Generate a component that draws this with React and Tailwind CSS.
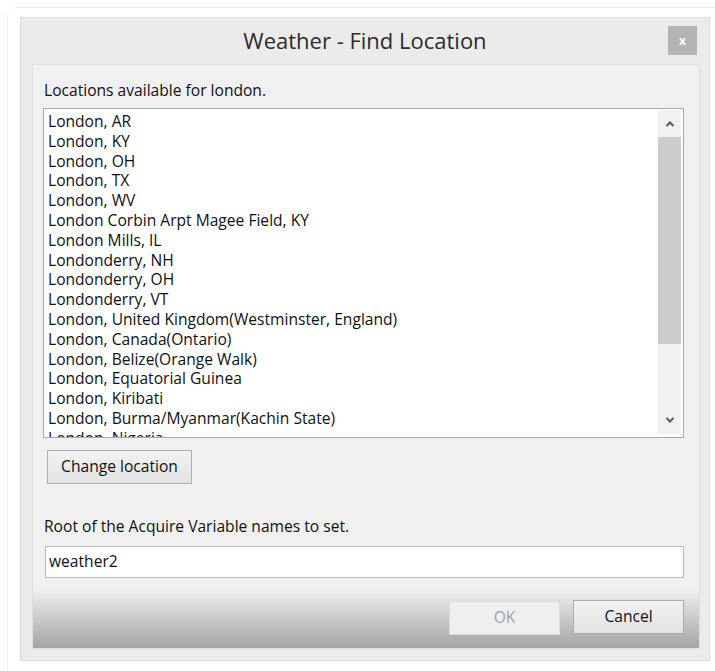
import React from "react";

const places = [
  "London, AR",
  "London, KY",
  "London, OH",
  "London, TX",
  "London, WV",
  "London Corbin Arpt Magee Field, KY",
  "London Mills, IL",
  "Londonderry, NH",
  "Londonderry, OH",
  "Londonderry, VT",
  "London, United Kingdom(Westminster, England)",
  "London, Canada(Ontario)",
  "London, Belize(Orange Walk)",
  "London, Equatorial Guinea",
  "London, Kiribati",
  "London, Burma/Myanmar(Kachin State)",
  "London, Nigeria",
];

function Chevron({ up }) {
  return (
    <svg width="10" height="7" viewBox="0 0 10 7" className="block">
      <path
        d={up ? "M1.5 6 L5 2.5 L8.5 6" : "M1.5 1 L5 4.5 L8.5 1"}
        fill="none"
        stroke="#5a5a5a"
        strokeWidth="2"
      />
    </svg>
  );
}

export default function App() {
  return (
    <div
      className="w-[715px] h-[671px] bg-white overflow-hidden pl-[7px] pt-[7px] text-[#111]"
      style={{ fontFamily: '"Open Sans", "Noto Sans", sans-serif' }}
    >
      <div className="h-[700px] w-[720px] border-l border-t border-[#efefef] rounded-tl-[9px] pl-[12px] pt-[9px]">
        {/* dialog window */}
        <div className="w-[690px] h-[644px] border border-[#dcdcdc] bg-[#ebebeb] flex flex-col">
          {/* title bar */}
          <div className="relative h-[46px] shrink-0 flex items-center justify-center">
            <span className="text-[22px] text-[#2b2b2b] leading-none -mt-[2px]">
              Weather - Find Location
            </span>
            <div className="absolute right-[12px] top-[8px] w-[29px] h-[29px] bg-[#b4b4b4] flex items-center justify-center text-white text-[12px] font-bold leading-none">
              x
            </div>
          </div>

          {/* client area */}
          <div className="ml-[11px] mr-[9px] h-[585px] border border-[#dedede] bg-[#f0f0f0] flex flex-col">
            <div className="flex-1 flex flex-col pl-[10px]">
              <div className="mt-[15px] h-[20px] leading-[20px] text-[15.6px] pl-[1px]">
                Locations available for london.
              </div>

              {/* list box */}
              <div className="mt-[8px] w-[641px] h-[330px] border border-[#a9a9a9] bg-white flex">
                <div className="flex-1 overflow-hidden pl-[4px] pt-[3px]">
                  {places.map((p) => (
                    <div
                      key={p}
                      className="h-[19.8px] leading-[19.8px] text-[15.6px] whitespace-nowrap"
                    >
                      {p}
                    </div>
                  ))}
                </div>
                <div className="w-[23px] mt-[1px] mb-[3px] mr-[2px] bg-[#f0f0f0] flex flex-col">
                  <div className="h-[27px] flex items-center justify-center">
                    <Chevron up />
                  </div>
                  <div className="h-[207px] bg-[#cdcdcd]" />
                  <div className="flex-1" />
                  <div className="h-[27px] flex items-center justify-center">
                    <Chevron />
                  </div>
                </div>
              </div>

              <button className="mt-[12px] ml-[4px] w-[145px] h-[34px] border border-[#adadad] bg-gradient-to-b from-[#f2f2f2] to-[#e3e3e3] text-[15.6px] leading-none">
                Change location
              </button>

              <div className="mt-[32px] h-[20px] leading-[20px] text-[15.6px] pl-[1px]">
                Root of the Acquire Variable names to set.
              </div>

              <div className="mt-[10px] ml-[2px] w-[639px] h-[32px] border border-[#b9b9b9] bg-white flex items-center pl-[3px] text-[15.6px]">
                weather2
              </div>
            </div>

            {/* button bar */}
            <div className="h-[58px] bg-gradient-to-b from-[#f0f0f0] to-[#a4a4a4] flex items-start justify-end pt-[10px] pr-[15px] gap-[13px]">
              <button className="w-[111px] h-[34px] border border-[#dcdcdc] bg-[#efefef] text-[#a3a3a3] text-[15.6px] leading-none mt-[1px]">
                OK
              </button>
              <button className="w-[111px] h-[34px] border border-[#adadad] bg-gradient-to-b from-[#f2f2f2] to-[#e3e3e3] text-[15.6px] leading-none">
                Cancel
              </button>
            </div>
          </div>
        </div>
      </div>
    </div>
  );
}
